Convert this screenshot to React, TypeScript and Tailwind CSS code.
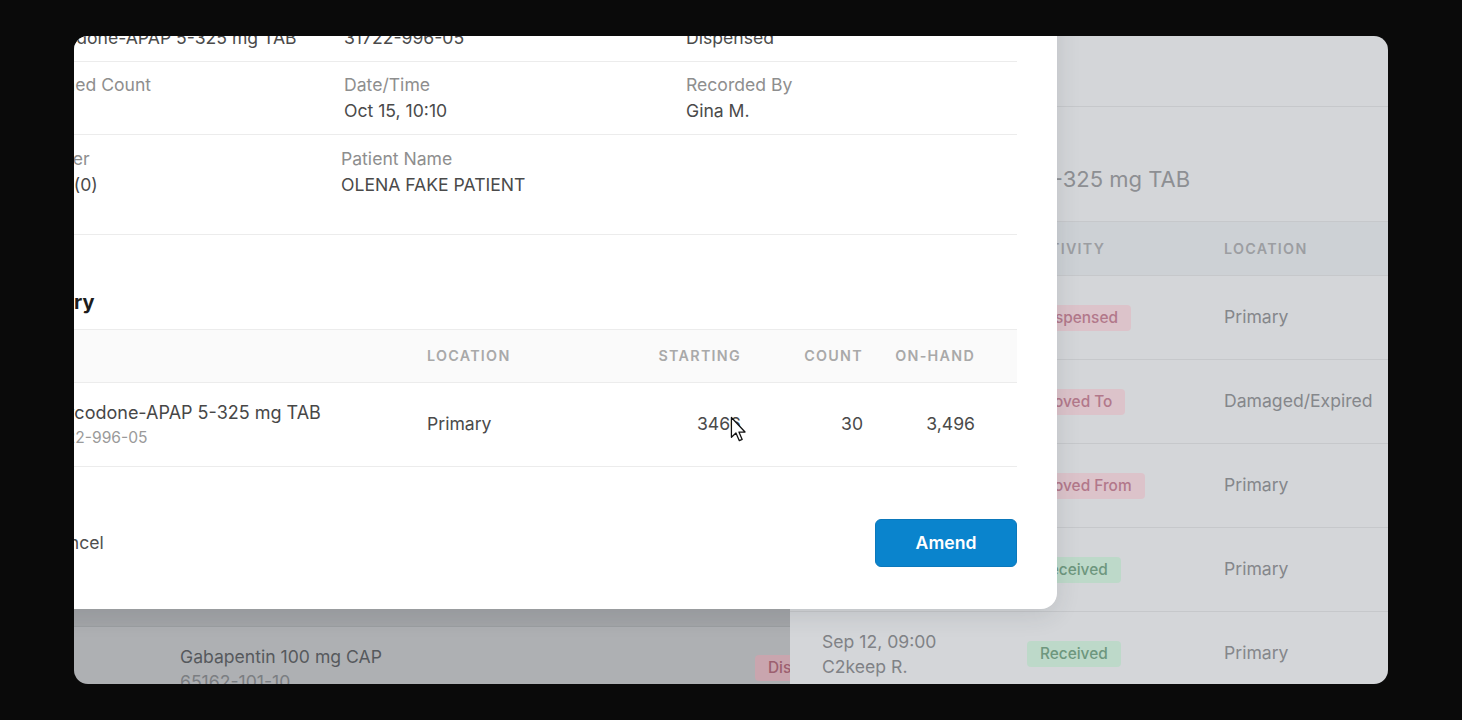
import React from "react";

const F = { fontFamily: "Inter, 'Noto Sans', sans-serif" };

function Badge({ text, tone }: { text: string; tone: "pink" | "green" }) {
  return (
    <span
      className={
        "inline-flex h-[26px] items-center rounded-[4px] px-[13px] text-[15.4px] font-medium " +
        (tone === "pink" ? "bg-[#dcc3ca] text-[#b2788a]" : "bg-[#bdd9c9] text-[#6e977e]")
      }
    >
      {text}
    </span>
  );
}

function RightRow({ badge, tone, loc, date, user }: { badge: string; tone: "pink" | "green"; loc: string; date?: string; user?: string }) {
  return (
    <div className="grid h-[84px] shrink-0 grid-cols-[205px_197px_1fr] items-center border-b border-[#c6c8cb] pl-[32px]">
      <div className="flex flex-col text-[17.6px] leading-[25px] text-[#808286]">
        {date && <span>{date}</span>}
        {user && <span>{user}</span>}
      </div>
      <div>
        <Badge text={badge} tone={tone} />
      </div>
      <div className="text-[17.6px] text-[#85878b]">{loc}</div>
    </div>
  );
}

export default function App() {
  return (
    <div className="h-[720px] w-[1462px] bg-[#0a0a0a] pl-[74px] pt-[36px]" style={F}>
      <div className="relative flex h-[648px] w-[1314px] overflow-hidden rounded-[14px]">
        {/* background: left area */}
        <div className="flex w-[716px] shrink-0 flex-col overflow-hidden bg-[#aeb0b3]">
          <div className="flex-1" />
          <div className="h-[19px] shrink-0 border-b border-[#9c9ea1] bg-[#a3a5a8]" />
          <div className="grid h-[57px] shrink-0 grid-cols-[681px_35px] items-start">
            <div className="flex flex-col pl-[106px] pt-[17px] text-[17.6px] leading-[25px]">
              <span className="text-[#56595d]">Gabapentin 100 mg CAP</span>
              <span className="text-[#7b7e82]">65162-101-10</span>
            </div>
            <div className="mt-[28px] overflow-hidden">
              <span className="inline-flex h-[26px] items-center rounded-l-[4px] bg-[#c9a5ae] pl-[13px] text-[15.4px] font-medium text-[#9c5f6f]">
                Dis
              </span>
            </div>
          </div>
        </div>

        {/* background: right side panel */}
        <div className="flex flex-1 flex-col bg-[#d4d6d9]">
          <div className="h-[71px] shrink-0 border-b border-[#c6c8cb]" />
          <div className="h-[114px] shrink-0 pl-[58px] pt-[58px] text-[22px] leading-[28px] text-[#8d8f93]">
            Oxycodone-APAP 5-325 mg TAB
          </div>
          <div className="grid h-[55px] shrink-0 grid-cols-[205px_197px_1fr] items-center border-y border-[#c6c8cb] bg-[#cdd1d5] pl-[32px] text-[14.3px] font-semibold tracking-[0.09em] text-[#9c9ea2]">
            <span>DATE</span>
            <span>ACTIVITY</span>
            <span>LOCATION</span>
          </div>
          <RightRow badge="Dispensed" tone="pink" loc="Primary" />
          <RightRow badge="Moved To" tone="pink" loc="Damaged/Expired" />
          <RightRow badge="Moved From" tone="pink" loc="Primary" />
          <RightRow badge="Received" tone="green" loc="Primary" />
          <RightRow badge="Received" tone="green" loc="Primary" date="Sep 12, 09:00" user="C2keep R." />
        </div>

        {/* modal */}
        <div className="absolute left-[-91px] top-[-47px] w-[1074px] rounded-br-[16px] bg-white px-[40px] shadow-[0_6px_24px_rgba(40,50,60,0.12)]">
          <div className="grid grid-cols-[321px_342px_1fr] border-b border-[#ececec] py-[10px] text-[17.6px] leading-[26px]">
            <div className="flex flex-col">
              <span className="text-[#8e8e8e]">Medication</span>
              <span className="text-[#4a4a4a]">Oxycodone-APAP 5-325 mg TAB</span>
            </div>
            <div className="flex flex-col">
              <span className="text-[#8e8e8e]">NDC</span>
              <span className="text-[#4a4a4a]">31722-996-05</span>
            </div>
            <div className="flex flex-col">
              <span className="text-[#8e8e8e]">Activity</span>
              <span className="text-[#4a4a4a]">Dispensed</span>
            </div>
          </div>
          <div className="grid grid-cols-[321px_342px_1fr] border-b border-[#ececec] py-[10px] text-[17.6px] leading-[26px]">
            <div className="flex flex-col">
              <span className="text-[#8e8e8e]">Scanned Count</span>
              <span className="text-[#4a4a4a]">30</span>
            </div>
            <div className="flex flex-col">
              <span className="text-[#8e8e8e]">Date/Time</span>
              <span className="text-[#4a4a4a]">Oct 15, 10:10</span>
            </div>
            <div className="flex flex-col">
              <span className="text-[#8e8e8e]">Recorded By</span>
              <span className="text-[#4a4a4a]">Gina M.</span>
            </div>
          </div>
          <div className="grid h-[100px] grid-cols-[318px_1fr] border-b border-[#ececec] pt-[11px] text-[17.6px] leading-[26px]">
            <div className="flex flex-col">
              <span className="text-[#8e8e8e]">Number</span>
              <span className="text-[#4a4a4a]">54321(0)</span>
            </div>
            <div className="flex flex-col">
              <span className="text-[#8e8e8e]">Patient Name</span>
              <span className="text-[#4a4a4a]">OLENA FAKE PATIENT</span>
            </div>
          </div>
          <div className="pb-[12px] pt-[52px] text-[20px] font-bold leading-[30px] text-[#1c1c1c]">History</div>
          <div className="grid h-[54px] grid-cols-[404px_194px_120px_122px_112px] items-center border-y border-[#ececec] bg-[#fafafa] text-[14.3px] font-semibold tracking-[0.09em] text-[#a9a9a9]">
            <span />
            <span>LOCATION</span>
            <span className="text-right">STARTING</span>
            <span className="text-right">COUNT</span>
            <span className="text-right">ON-HAND</span>
          </div>
          <div className="grid h-[84px] grid-cols-[404px_194px_120px_122px_112px] items-center border-b border-[#ececec]">
            <div className="flex flex-col pl-[18px]">
              <span className="text-[18px] leading-[25px] text-[#474747]">Oxycodone-APAP 5-325 mg TAB</span>
              <span className="text-[15.6px] leading-[25px] text-[#9a9a9a]">31722-996-05</span>
            </div>
            <span className="text-[17.6px] text-[#4a4a4a]">Primary</span>
            <span className="relative text-right text-[17.6px] text-[#4a4a4a]">
              3466
              <svg className="absolute right-[-6px] top-[5px]" width="17" height="27" viewBox="0 0 12 19">
                <path d="M1 1 L1 15 L4.2 12 L6.6 17.4 L8.6 16.5 L6.3 11.3 L10.6 11.3 Z" fill="#fff" stroke="#111" strokeWidth="0.9" strokeLinejoin="round" />
              </svg>
            </span>
            <span className="text-right text-[17.6px] text-[#4a4a4a]">30</span>
            <span className="text-right text-[17.6px] text-[#4a4a4a]">3,496</span>
          </div>
          <div className="flex items-center justify-between pb-[42px] pt-[52px]">
            <button className="px-[23px] text-[17.6px] text-[#4f4f4f]">Cancel</button>
            <button className="h-[48px] w-[142px] rounded-[6px] border border-[#0b78bb] bg-[#0a84cd] text-[17.6px] font-semibold text-white">
              Amend
            </button>
          </div>
        </div>
      </div>
    </div>
  );
}
